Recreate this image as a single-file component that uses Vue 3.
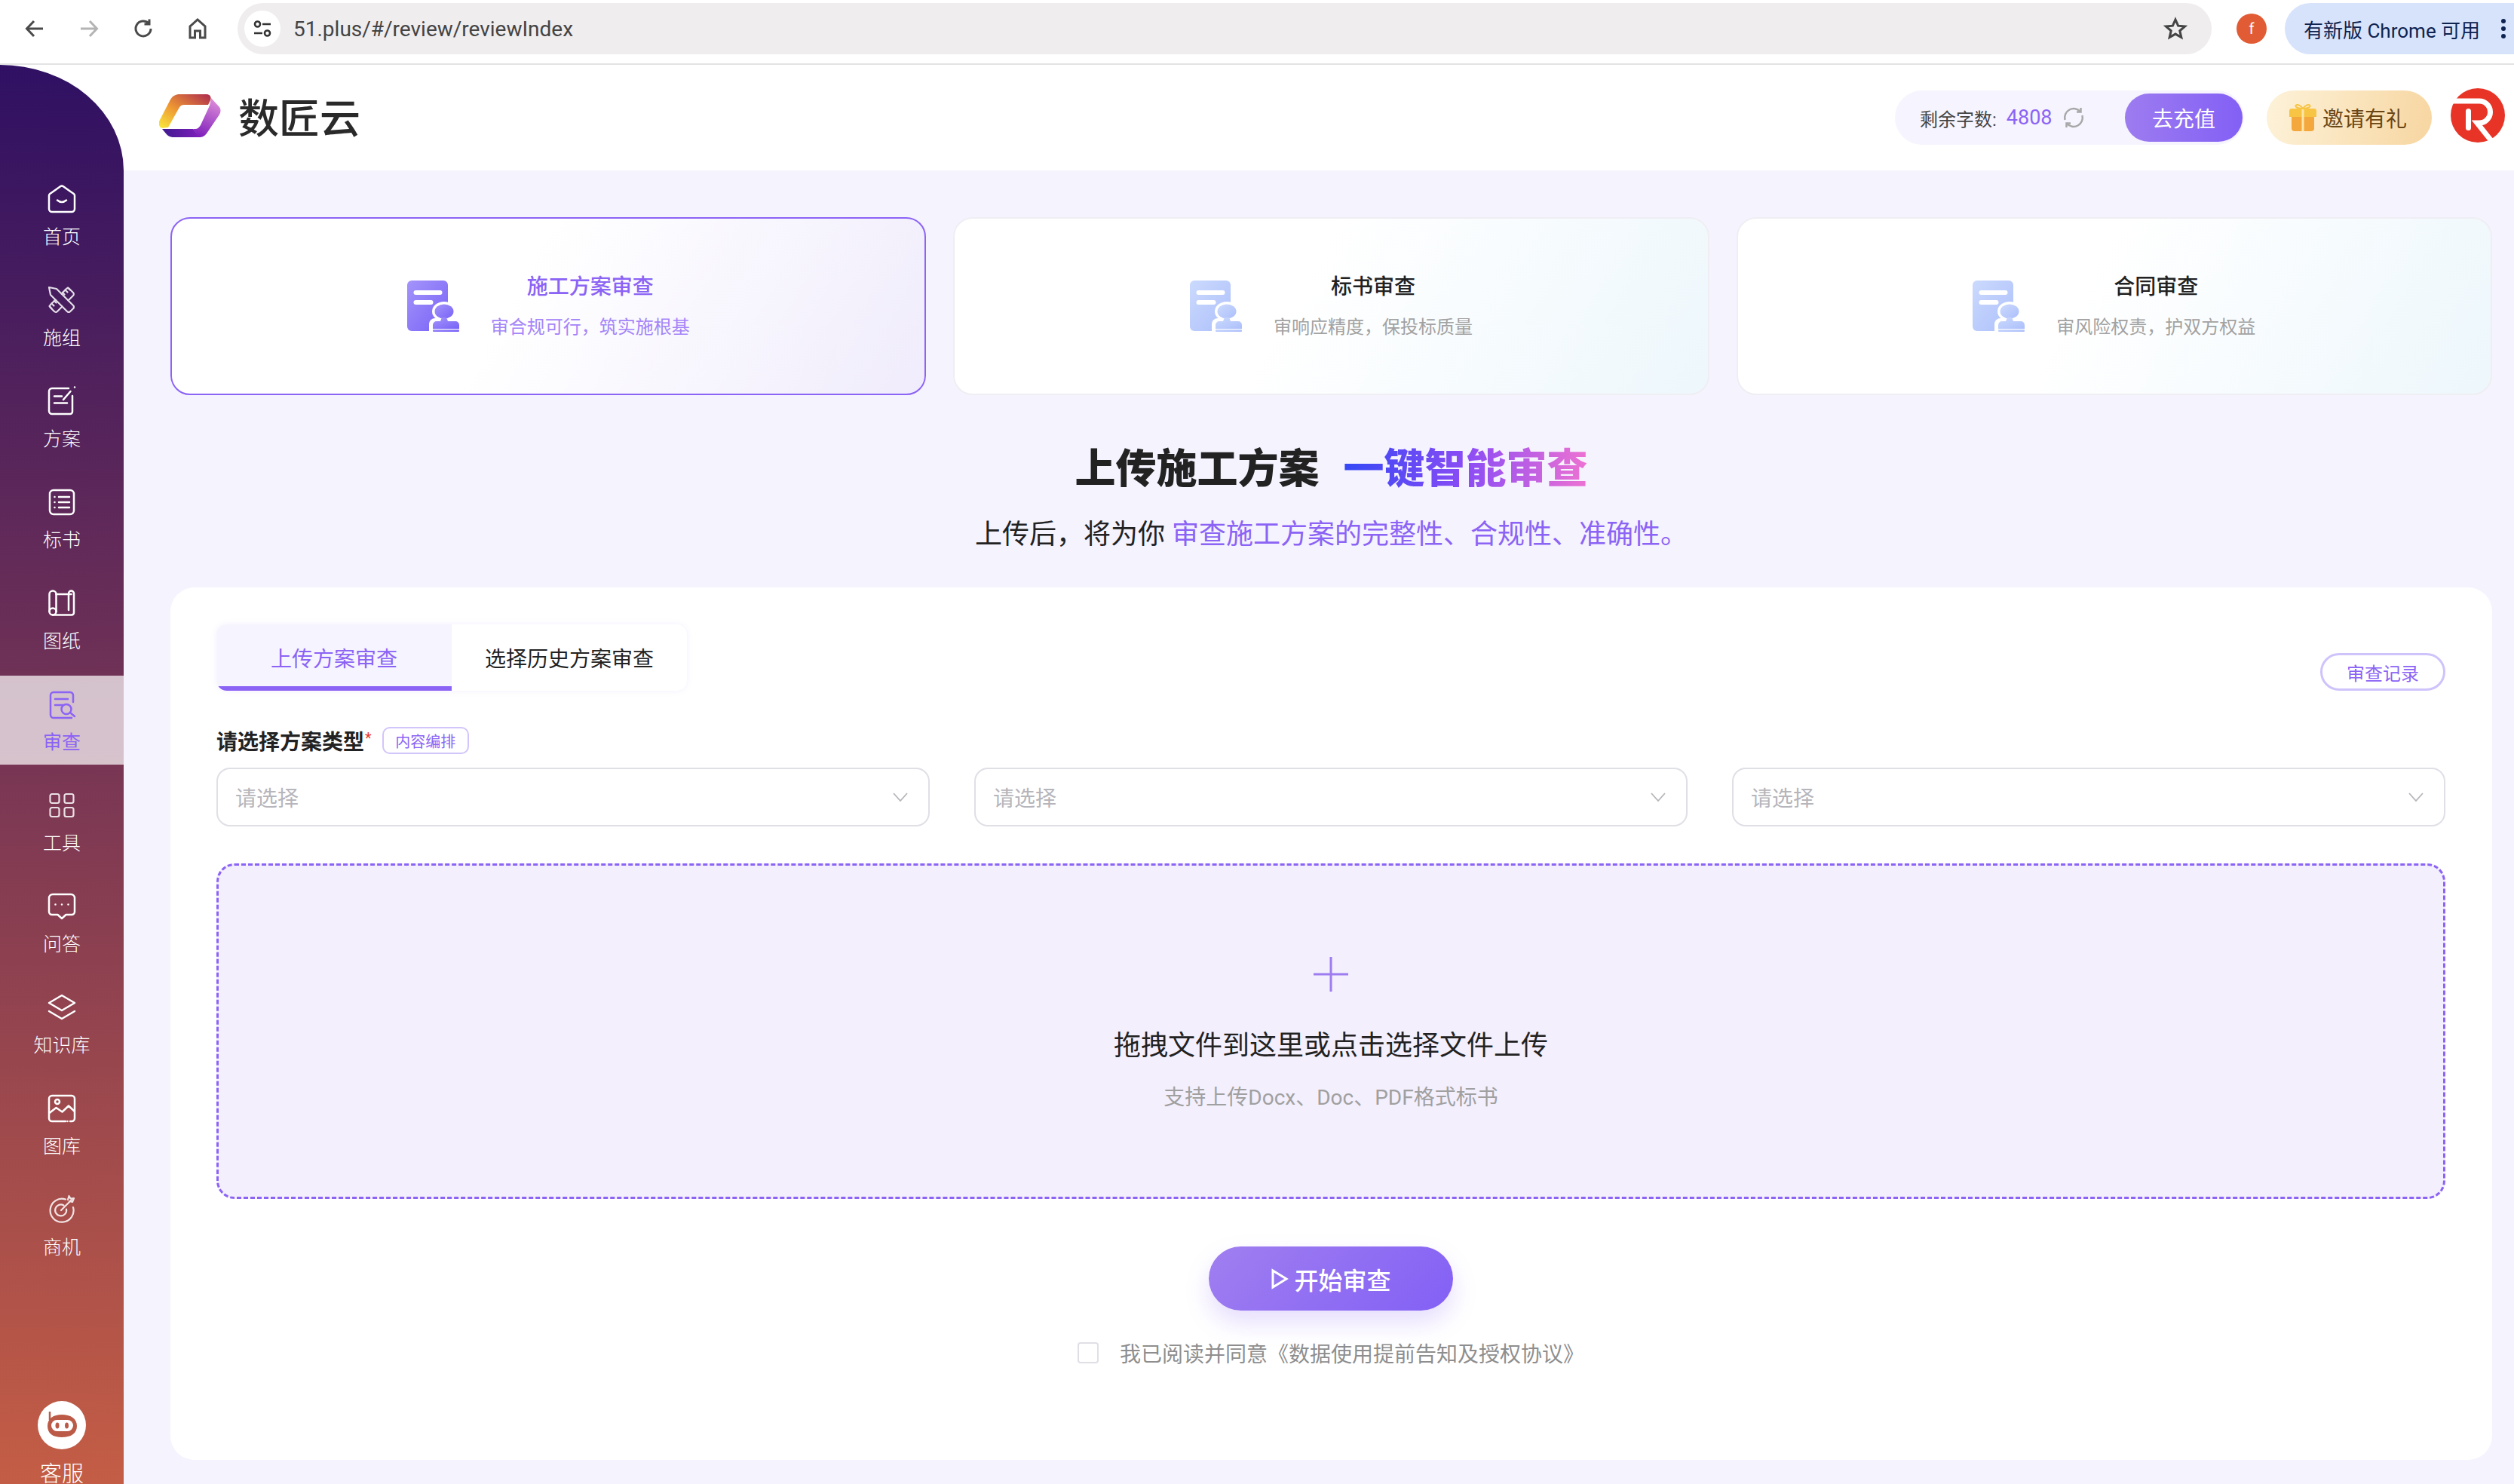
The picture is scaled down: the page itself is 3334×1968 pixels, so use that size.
<script setup>
const navItems = [
  {
    label: '首页',
    paths: [
      'M3 15.500a3 3 0 0 1 1.200-2.400L18 3.200a3.400 3.400 0 0 1 4 0l13.800 9.900a3 3 0 0 1 1.200 2.400V33a4 4 0 0 1-4 4H7a4 4 0 0 1-4-4Z',
      'M14 21.500q6 5 12 0'
    ]
  },
  {
    label: '施组',
    thin: true,
    paths: [
      'M3 3l10 2 22 22a3 3 0 0 1 0 4.200L31.200 35a3 3 0 0 1-4.200 0L5 13Z',
      'M19.500 11.500 26 5a2.800 2.800 0 0 1 4 0l5 5a2.800 2.800 0 0 1 0 4l-6.500 6.500',
      'M11.500 19.500 5 26a2.800 2.800 0 0 0 0 4l5 5a2.800 2.800 0 0 0 4 0l6.500-6.500',
      'M24.500 6.500l3 3M21 10l2.500 2.500M28 3.500l3 3',
      'M6.500 24.500l3 3M10 21l2.500 2.500M3.500 28l3 3'
    ]
  },
  {
    label: '方案',
    paths: [
      'M29 3H7a4 4 0 0 0-4 4v26a4 4 0 0 0 4 4h24a3 3 0 0 0 3-3V13',
      'M10 13.500h10M10 22.500h17',
      'M22 18 31.500 7',
      'M37 1.500v0'
    ]
  },
  {
    label: '标书',
    paths: [
      'M9 4h22a5 5 0 0 1 5 5v22a5 5 0 0 1-5 5H9a5 5 0 0 1-5-5V9a5 5 0 0 1 5-5Z',
      'M16 13h14M16 20h14M16 27h14',
      'M10.500 13v0M10.500 20v0M10.500 27v0'
    ]
  },
  {
    label: '图纸',
    paths: [
      'M3.500 31V8a4.500 4.500 0 0 1 9 0v23',
      'M8 26.500a4.500 4.500 0 1 1 0 9 4.500 4.500 0 0 1 0-9Z',
      'M12.500 8h20M8 35.500h25a3 3 0 0 0 3-3V7a3.500 3.500 0 0 0-7 0v22'
    ]
  },
  {
    label: '审查',
    active: true,
    paths: [
      'M35 17V8a4 4 0 0 0-4-4H9a4 4 0 0 0-4 4v26a4 4 0 0 0 4 4h24',
      'M11 13h17M11 21h10',
      'M26 20a6.500 6.500 0 1 1 0 13 6.500 6.500 0 0 1 0-13Z',
      'M31 31l6 5'
    ]
  },
  {
    label: '工具',
    thin: true,
    paths: [
      'M7 5h7a2.500 2.500 0 0 1 2.500 2.500v7A2.500 2.500 0 0 1 14 17H7a2.500 2.500 0 0 1-2.500-2.500v-7A2.500 2.500 0 0 1 7 5Z',
      'M26 5h7a2.500 2.500 0 0 1 2.500 2.500v7A2.500 2.500 0 0 1 33 17h-7a2.500 2.500 0 0 1-2.500-2.500v-7A2.500 2.500 0 0 1 26 5Z',
      'M7 23h7a2.500 2.500 0 0 1 2.500 2.500v7A2.500 2.500 0 0 1 14 35H7a2.500 2.500 0 0 1-2.500-2.500v-7A2.500 2.500 0 0 1 7 23Z',
      'M26 23h7a2.500 2.500 0 0 1 2.500 2.500v7A2.500 2.500 0 0 1 33 35h-7a2.500 2.500 0 0 1-2.500-2.500v-7A2.500 2.500 0 0 1 26 23Z'
    ]
  },
  {
    label: '问答',
    paths: [
      'M8 4h24a5 5 0 0 1 5 5v18a4 4 0 0 1-4 4h-7.500L20 36l-5.500-5H7a4 4 0 0 1-4-4V9a5 5 0 0 1 5-5Z',
      'M11.500 17.500v0M20 17.500v0M28.500 17.500v0'
    ]
  },
  {
    label: '知识库',
    paths: [
      'M20 4 37 14 20 24 3 14Z',
      'M3 25l17 10 17-10'
    ]
  },
  {
    label: '图库',
    paths: [
      'M25 37H7a4 4 0 0 1-4-4V7a4 4 0 0 1 4-4h26a4 4 0 0 1 4 4v26a4 4 0 0 1-4 4h-2',
      'M3.500 26l9-7 8 5.500 8.500-8 7.500 7',
      'M14 8a3 3 0 1 1 0 6 3 3 0 0 1 0-6Z',
      'M27.500 37v0'
    ]
  },
  {
    label: '商机',
    thin: true,
    paths: [
      'M25 6.500A15.500 15.500 0 1 0 35 17',
      'M22.500 14.500a7.500 7.500 0 1 0 3.500 5',
      'M19 21 33 7',
      'M28 7l1.500-5 2 3.500 4.500-.5-2 5-4-1'
    ]
  }
]

const reviewCards = [
  { title: '施工方案审查', desc: '审合规可行，筑实施根基', active: true },
  { title: '标书审查', desc: '审响应精度，保投标质量' },
  { title: '合同审查', desc: '审风险权责，护双方权益' }
]

const selects = [1, 2, 3]
</script>

<template>
  <div class="page">
    <div class="browser-bar">
      <div class="nav-btn">
        <svg width="30" height="30" viewBox="0 0 30 30"><path d="M26 15H5M14 5 4.500 15l9.500 10" /></svg>
      </div>
      <div class="nav-btn disabled">
        <svg width="30" height="30" viewBox="0 0 30 30"><path d="M4 15h21M16 5l9.500 10L16 25" /></svg>
      </div>
      <div class="nav-btn">
        <svg width="30" height="30" viewBox="0 0 30 30"><path d="M25 15a10 10 0 1 1-3-7.200M23 2.500V9h-6.500" /></svg>
      </div>
      <div class="nav-btn">
        <svg width="30" height="30" viewBox="0 0 30 30"><path d="M5 27V12L15 3l10 9v15h-6.500v-9h-7v9Z" /></svg>
      </div>
      <div class="omnibox">
        <span class="site-chip">
          <svg width="28" height="28" viewBox="0 0 28 28">
            <circle cx="7.500" cy="8" r="3.500" />
            <circle cx="20.500" cy="20" r="3.500" />
            <path d="M14 8h11M3 20h11" />
          </svg>
        </span>
        <span class="url">51.plus/#/review/reviewIndex</span>
        <svg class="star" width="32" height="32" viewBox="0 0 32 32">
          <path d="m16 4 3.600 8.200 8.900.8-6.700 5.900 2 8.700L16 23.100l-7.800 4.500 2-8.700L3.500 13l8.900-.8Z" />
        </svg>
      </div>
      <span class="ext-avatar">f</span>
      <div class="update-pill">
        <span>有新版 Chrome 可用</span>
        <i></i>
      </div>
    </div>

    <div class="shell">
      <aside class="sidebar">
        <div
          v-for="item in navItems"
          :key="item.label"
          class="nav-item"
          :class="{ active: item.active, thin: item.thin }"
        >
          <svg class="nav-icon" width="40" height="40" viewBox="0 0 40 40">
            <path v-for="d in item.paths" :key="d" :d="d" />
          </svg>
          <span>{{ item.label }}</span>
        </div>

        <div class="service">
          <svg width="64" height="64" viewBox="0 0 64 64">
            <circle cx="32" cy="32" r="32" fill="#fff" />
            <path d="M13 33c0-10 8-15 19-15s20 5 20 15-8 15-20 15-19-5-19-15Z" fill="#bb5a47" />
            <rect x="18" y="25" width="29" height="15" rx="7.500" fill="#fff" />
            <ellipse cx="26" cy="32.500" rx="2.500" ry="4" fill="#bb5a47" />
            <ellipse cx="38.500" cy="32.500" rx="2.500" ry="4" fill="#bb5a47" />
            <path d="M16 14v11" stroke="#bb5a47" stroke-width="2.500" fill="none" />
          </svg>
          <span>客服</span>
        </div>
      </aside>

      <div class="content">
        <header class="top-header">
          <div class="brand">
            <svg width="84" height="60" viewBox="0 0 84 60">
              <defs>
                <linearGradient id="logoA" x1="0" y1="1" x2="1" y2="0">
                  <stop offset="0" stop-color="#f8ea3c" />
                  <stop offset=".42" stop-color="#ef9a33" />
                  <stop offset="1" stop-color="#ad2a4e" />
                </linearGradient>
                <linearGradient id="logoB" x1=".6" y1="0" x2=".3" y2="1">
                  <stop offset="0" stop-color="#dc8ad8" />
                  <stop offset="1" stop-color="#7e20bb" />
                </linearGradient>
                <linearGradient id="logoC" x1="0" y1="0" x2="1" y2="0">
                  <stop offset="0" stop-color="#3f1a8f" />
                  <stop offset="1" stop-color="#7e20bb" />
                </linearGradient>
              </defs>
              <path d="M3 46C-1 43-1 39 1 35L15 8c3-5 7-7 12-7h35c5 0 8 3 6 8l-3 6H34c-4 0-6 1-8 5L12 45Z" fill="url(#logoA)" />
              <path d="M4 47h41l9 11H20c-5 0-9-2-11-5Z" fill="url(#logoC)" />
              <path d="M69 6l11 12c2 3 2 6 0 10L63 53c-3 4-6 5-10 5l-8-11h3c3 0 5-2 7-5l12-26Z" fill="url(#logoB)" />
            </svg>
            <span>数匠云</span>
          </div>

          <div class="header-actions">
            <div class="balance">
              <span class="balance-label">剩余字数:</span>
              <span class="balance-num">4808</span>
              <svg width="32" height="32" viewBox="0 0 32 32">
                <path d="M4.500 19A12 12 0 0 1 25 8M27.500 13A12 12 0 0 1 7 24" />
                <path d="M25.500 3v5.500H20M6.500 29v-5.500H12" />
              </svg>
              <button type="button" class="recharge">去充值</button>
            </div>
            <div class="invite">
              <svg width="36" height="36" viewBox="0 0 36 36">
                <path d="M3 16h30v16a4 4 0 0 1-4 4H7a4 4 0 0 1-4-4Z" fill="#f3a73c" />
                <path d="M0 9a3 3 0 0 1 3-3h30a3 3 0 0 1 3 3v8H0Z" fill="#f8c443" />
                <path d="M16.500 6h3v30h-3Z" fill="#fde6a8" />
                <path d="M18 6C15 2 11 0 9 1.500 7 3.500 11 6 18 6Zm0 0c3-4 7-6 9-4.500C29 3.500 25 6 18 6Z" fill="none" stroke="#f8c443" stroke-width="2" />
              </svg>
              <span>邀请有礼</span>
            </div>
            <svg class="avatar" width="72" height="72" viewBox="0 0 72 72">
              <circle cx="36" cy="36" r="36" fill="#e73427" />
              <path d="M0 17h38a14.500 14.500 0 0 1 0 29h-3l20 25" fill="none" stroke="#fff" stroke-width="7" />
              <rect x="20" y="27" width="7" height="29" rx="3.500" fill="#fff" />
            </svg>
          </div>
        </header>

        <main class="main">
          <section class="cards">
            <div
              v-for="card in reviewCards"
              :key="card.title"
              class="card"
              :class="{ active: card.active }"
            >
              <svg class="stamp" width="70" height="68" viewBox="0 0 70 68">
                <defs>
                  <linearGradient id="stampOn" x1="0" y1="0" x2="1" y2="1">
                    <stop offset="0" stop-color="#a494fa" />
                    <stop offset="1" stop-color="#7762f7" />
                  </linearGradient>
                  <linearGradient id="stampOff" x1="0" y1="0" x2="1" y2="1">
                    <stop offset="0" stop-color="#cbdafd" />
                    <stop offset="1" stop-color="#adbffb" />
                  </linearGradient>
                </defs>
                <g :fill="card.active ? 'url(#stampOn)' : 'url(#stampOff)'">
                  <rect width="54" height="67" rx="6" />
                  <ellipse cx="49" cy="41" rx="16" ry="13" fill="#fff" />
                  <path d="M29 67V58a8 8 0 0 1 8-8h24a8 8 0 0 1 8 8v9Z" fill="#fff" />
                  <ellipse cx="49" cy="41" rx="12.500" ry="9.500" />
                  <path d="M34 64v-5a5 5 0 0 1 5-5h5l2-5h6l2 5h10a5 5 0 0 1 5 5v5Z" />
                  <rect x="34" y="65" width="35" height="3" rx="1" />
                </g>
                <rect x="8.500" y="13" width="38" height="6" rx="3" fill="#fff" />
                <rect x="8.500" y="26" width="26" height="6" rx="3" fill="#fff" />
              </svg>
              <div class="card-text">
                <strong>{{ card.title }}</strong>
                <span>{{ card.desc }}</span>
              </div>
            </div>
          </section>

          <h1 class="headline">
            <span>上传施工方案</span>
            <span class="headline-grad">一键智能审查</span>
          </h1>
          <p class="subline">上传后，将为你 <em>审查施工方案的完整性、合规性、准确性。</em></p>

          <section class="panel">
            <div class="panel-top">
              <div class="tabs">
                <div class="tab active">上传方案审查</div>
                <div class="tab">选择历史方案审查</div>
              </div>
              <button type="button" class="record-btn">审查记录</button>
            </div>

            <div class="field-label">
              <strong>请选择方案类型</strong><sup>*</sup>
              <span class="tag">内容编排</span>
            </div>

            <div class="select-row">
              <div v-for="n in selects" :key="n" class="select">
                <span>请选择</span>
                <svg width="20" height="12" viewBox="0 0 20 12"><path d="M1 1l9 10 9-10" /></svg>
              </div>
            </div>

            <div class="dropzone">
              <svg width="46" height="46" viewBox="0 0 46 46"><path d="M23 0v46M0 23h46" /></svg>
              <p class="drop-title">拖拽文件到这里或点击选择文件上传</p>
              <p class="drop-sub">支持上传Docx、Doc、PDF格式标书</p>
            </div>

            <button type="button" class="start-btn">
              <svg width="24" height="28" viewBox="0 0 24 28"><path d="M3 3v22l18-11Z" /></svg>
              <span>开始审查</span>
            </button>

            <label class="agree">
              <i></i>
              <span>我已阅读并同意《数据使用提前告知及授权协议》</span>
            </label>
          </section>
        </main>
      </div>
    </div>
  </div>
</template>

<style scoped>
.page {
  width: 100%;
  height: 100vh;
  display: flex;
  flex-direction: column;
  overflow: hidden;
  background: #fff;
  color: #222;
  font-family: Roboto, "Noto Sans CJK SC", sans-serif;
}

/* browser toolbar */
.browser-bar {
  flex: none;
  height: 86px;
  box-sizing: border-box;
  display: flex;
  align-items: flex-start;
  padding: 4px 0 0 10px;
  border-bottom: 2px solid #e3e3e3;
  background: #fff;
}

.nav-btn {
  width: 72px;
  height: 68px;
  display: grid;
  place-items: center;
}

.nav-btn svg {
  fill: none;
  stroke: #4a4a4a;
  stroke-width: 3;
}

.nav-btn.disabled svg {
  stroke: #b4b4b4;
}

.omnibox {
  flex: 1;
  height: 68px;
  margin-left: 17px;
  display: flex;
  align-items: center;
  padding: 0 32px 0 9px;
  border-radius: 34px;
  background: #efedee;
}

.site-chip {
  width: 48px;
  height: 48px;
  display: grid;
  place-items: center;
  border-radius: 50%;
  background: #fff;
}

.site-chip svg {
  fill: none;
  stroke: #333;
  stroke-width: 2.600;
}

.url {
  margin-left: 17px;
  font-size: 28px;
  color: #444;
}

.star {
  margin-left: auto;
  fill: none;
  stroke: #444;
  stroke-width: 3;
}

.ext-avatar {
  width: 40px;
  height: 40px;
  margin: 14px 0 0 33px;
  display: grid;
  place-items: center;
  border-radius: 50%;
  background: #e15c34;
  color: #fff;
  font-size: 20px;
}

.update-pill {
  width: 304px;
  height: 68px;
  margin-left: 24px;
  box-sizing: border-box;
  display: flex;
  align-items: center;
  padding-left: 25px;
  border-radius: 34px 0 0 34px;
  background: #d7e3fb;
  color: #0e2350;
  font-size: 26px;
  white-space: nowrap;
}

.update-pill i {
  width: 6px;
  height: 6px;
  margin-left: auto;
  margin-right: 11px;
  border-radius: 50%;
  background: #0e2350;
  box-shadow: 0 -10px 0 #0e2350, 0 10px 0 #0e2350;
}

.shell {
  flex: 1;
  min-height: 0;
  display: flex;
}

/* sidebar */
.sidebar {
  flex: none;
  width: 164px;
  box-sizing: border-box;
  display: flex;
  flex-direction: column;
  gap: 16px;
  padding-top: 140px;
  border-top-right-radius: 164px 140px;
  background: linear-gradient(180deg, #2f1063 0%, #c45d45 100%);
  color: #fff;
}

.nav-item {
  flex: none;
  height: 118px;
  box-sizing: border-box;
  display: flex;
  flex-direction: column;
  align-items: center;
  padding-top: 18px;
  font-size: 25px;
  font-family: "Noto Sans CJK SC", sans-serif;
  font-weight: 300;
  line-height: 30px;
}

.nav-item span {
  margin-top: 13px;
}

.nav-icon {
  fill: none;
  stroke: #fff;
  stroke-width: 2.500;
  stroke-linecap: round;
  stroke-linejoin: round;
}

.nav-item.thin .nav-icon {
  stroke-width: 2.200;
  opacity: .85;
}

.nav-item.active {
  background: rgba(255, 255, 255, .7);
  color: #8b63f5;
  font-weight: 400;
}

.nav-item.active .nav-icon {
  stroke: #8b63f5;
}

.service {
  margin-top: auto;
  display: flex;
  flex-direction: column;
  align-items: center;
  font-size: 29px;
  font-family: "Noto Sans CJK SC", sans-serif;
  font-weight: 300;
  line-height: 32px;
}

.service span {
  margin-top: 14px;
}

/* header */
.content {
  flex: 1;
  min-width: 0;
  display: flex;
  flex-direction: column;
}

.top-header {
  flex: none;
  height: 140px;
  display: flex;
  align-items: center;
  justify-content: space-between;
  padding: 0 12px 0 47px;
  background: #fff;
}

.brand {
  display: flex;
  align-items: center;
  gap: 21px;
  margin-top: -5px;
  font-family: "Noto Sans CJK SC", sans-serif;
  font-size: 54px;
  font-weight: 500;
  color: #2a2a2a;
}

.header-actions {
  display: flex;
  align-items: center;
}

.balance {
  width: 463px;
  height: 72px;
  box-sizing: border-box;
  display: flex;
  align-items: center;
  padding: 0 2px 0 33px;
  border-radius: 36px;
  background: #f6f4fe;
}

.balance-label {
  font-size: 24px;
  color: #444;
}

.balance-num {
  margin-left: 13px;
  font-size: 27px;
  color: #8b63f5;
}

.balance svg {
  margin-left: 12px;
  fill: none;
  stroke: #a8a8a8;
  stroke-width: 2.500;
}

.recharge {
  width: 156px;
  height: 64px;
  margin-left: auto;
  border: 0;
  border-radius: 32px;
  background: linear-gradient(90deg, #9d7cf0, #8360f5);
  color: #fff;
  font: inherit;
  font-size: 28px;
}

.invite {
  width: 219px;
  height: 72px;
  margin-left: 30px;
  box-sizing: border-box;
  display: flex;
  align-items: center;
  gap: 8px;
  padding-left: 30px;
  border-radius: 36px;
  background: linear-gradient(100deg, #fdf2d9, #f7d6a1);
  color: #6b4615;
  font-size: 28px;
}

.avatar {
  margin: -6px 0 0 25px;
}

/* main */
.main {
  flex: 1;
  min-height: 0;
  padding: 62px 29px 0 62px;
  background: #f5f3fe;
}

.cards {
  display: grid;
  grid-template-columns: repeat(3, 1fr);
  gap: 36px;
}

.card {
  height: 236px;
  box-sizing: border-box;
  display: flex;
  align-items: center;
  justify-content: center;
  gap: 41px;
  border: 2px solid #efeef3;
  border-radius: 26px;
  background: linear-gradient(120deg, #fff 45%, #edf7fc 100%);
}

.card.active {
  border-color: #8b63f5;
  background: linear-gradient(120deg, #fff 45%, #f0ecfc 100%);
}

.card-text {
  display: flex;
  flex-direction: column;
  align-items: center;
  gap: 15px;
}

.card-text strong {
  font-size: 28px;
  line-height: 40px;
  font-weight: 500;
  color: #222;
}

.card-text span {
  font-size: 24px;
  line-height: 36px;
  color: #a2a2a2;
}

.card.active strong {
  color: #8b63f5;
}

.card.active span {
  color: #a585f8;
}

.headline {
  display: flex;
  justify-content: center;
  gap: 32px;
  margin: 64px 0 0;
  font-size: 54px;
  line-height: 70px;
  font-weight: 900;
  color: #222;
}

.headline-grad {
  background: linear-gradient(90deg, #3448f5 0%, #8b4cf5 50%, #ee72d2 100%);
  -webkit-background-clip: text;
  background-clip: text;
  color: transparent;
}

.subline {
  margin: 26px 0 0;
  text-align: center;
  font-size: 36px;
  line-height: 50px;
  color: #222;
}

.subline em {
  font-style: normal;
  color: #8b63f5;
}

.panel {
  margin-top: 45px;
  padding: 49px 62px 122px 61px;
  border-radius: 32px;
  background: #fff;
}

.panel-top {
  display: flex;
  align-items: flex-end;
  justify-content: space-between;
}

.tabs {
  display: flex;
  border-radius: 14px;
  overflow: hidden;
  box-shadow: 0 0 8px rgba(139, 99, 245, .1);
}

.tab {
  width: 312px;
  height: 88px;
  box-sizing: border-box;
  display: grid;
  place-items: center;
  font-size: 28px;
  color: #222;
}

.tab.active {
  padding-top: 6px;
  border-bottom: 6px solid #8b63f5;
  background: #f6f4fe;
  color: #8b63f5;
}

.record-btn {
  width: 166px;
  height: 50px;
  border: 3px solid #cfc3fb;
  border-radius: 25px;
  background: #fff;
  color: #8b63f5;
  font: inherit;
  font-size: 24px;
}

.field-label {
  height: 36px;
  margin-top: 48px;
  display: flex;
  align-items: center;
  font-size: 28px;
}

.field-label strong {
  font-weight: 600;
}

.field-label sup {
  align-self: flex-start;
  margin-left: 1px;
  color: #e8382c;
  font-size: 20px;
  line-height: 30px;
}

.tag {
  width: 115px;
  height: 36px;
  margin-left: 14px;
  box-sizing: border-box;
  display: grid;
  place-items: center;
  border: 2px solid #d2c5fb;
  border-radius: 10px;
  color: #8b63f5;
  font-size: 20px;
}

.select-row {
  display: grid;
  grid-template-columns: repeat(3, 1fr);
  gap: 59px;
  margin-top: 18px;
}

.select {
  height: 78px;
  box-sizing: border-box;
  display: flex;
  align-items: center;
  justify-content: space-between;
  padding: 0 27px 0 23px;
  border: 2px solid #dfdfe6;
  border-radius: 18px;
  font-size: 28px;
  color: #b5b5bb;
}

.select svg {
  fill: none;
  stroke: #b5b5bb;
  stroke-width: 1.800;
}

.dropzone {
  height: 445px;
  margin-top: 49px;
  box-sizing: border-box;
  display: flex;
  flex-direction: column;
  align-items: center;
  padding-top: 121px;
  border: 3px dashed #8b63f5;
  border-radius: 24px;
  background: #f3effd;
}

.dropzone svg {
  fill: none;
  stroke: #9d7cf0;
  stroke-width: 3;
}

.drop-title {
  margin: 47px 0 0;
  font-size: 36px;
  line-height: 50px;
  color: #222;
}

.drop-sub {
  margin: 24px 0 0;
  font-size: 28px;
  line-height: 40px;
  color: #a0a0a0;
}

.start-btn {
  width: 324px;
  height: 85px;
  margin: 63px auto 0;
  display: flex;
  align-items: center;
  justify-content: center;
  gap: 7px;
  border: 0;
  border-radius: 43px;
  background: linear-gradient(135deg, #a07ff0, #8360f5);
  box-shadow: 0 16px 32px rgba(139, 99, 245, .22);
  color: #fff;
  font: inherit;
  font-size: 32px;
  font-weight: 500;
}

.start-btn svg {
  fill: none;
  stroke: #fff;
  stroke-width: 3;
}

.agree {
  height: 40px;
  margin-top: 36px;
  display: flex;
  align-items: center;
  justify-content: center;
  gap: 28px;
  font-size: 28px;
  color: #8e8e8e;
}

.agree i {
  width: 28px;
  height: 28px;
  box-sizing: border-box;
  border: 2px solid #dfdfe6;
  border-radius: 4px;
}
</style>

<style>
html,
body {
  margin: 0;
  overflow: hidden;
  background: #fff;
}
</style>
